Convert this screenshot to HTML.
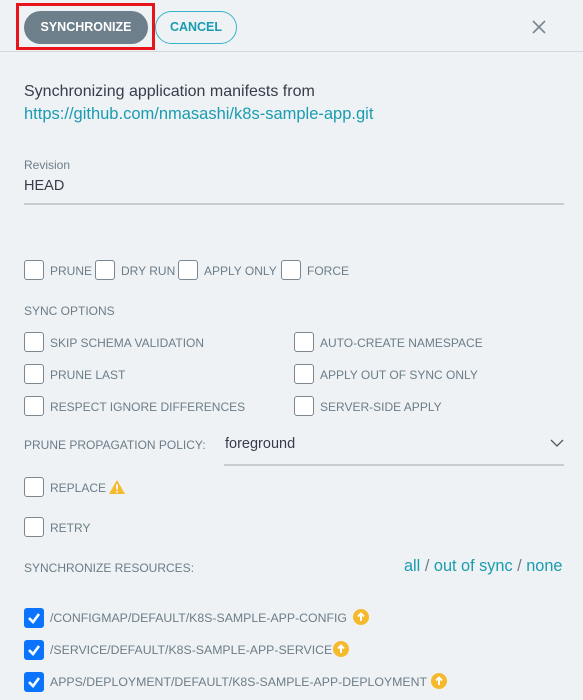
<!DOCTYPE html><html><head><style>
html,body{margin:0;width:583px;height:700px;overflow:hidden}
body{background:#eef2f5;font-family:"Liberation Sans",sans-serif;position:relative}
.a{position:absolute;white-space:nowrap}
.cb{position:absolute;width:18px;height:18px;border:1px solid #7a8690;border-radius:3px;background:#fff}
.cc{position:absolute;width:20px;height:20px;border-radius:3px;background:#0a74ff}
.l{position:absolute;font-size:12px;color:#6c7d88;white-space:nowrap}
.r{font-size:12.3px}
.up{position:absolute;width:16px;height:16px}
</style></head><body>
<div class="a" style="left:0;top:51px;width:583px;height:1px;background:#d3d8dc"></div>
<div class="a" style="left:16px;top:3px;width:133px;height:41px;border:3px solid #e8131b"></div>
<div class="a" style="left:24px;top:11px;width:124px;height:33px;border-radius:17px;background:#6d7f8b;color:#fff;font-weight:bold;font-size:12.5px;line-height:33px;text-align:center">SYNCHRONIZE</div>
<div class="a" style="left:155px;top:11px;width:80px;height:31px;border-radius:17px;border:1px solid #3ab5c8;color:#1a9cb0;font-weight:bold;font-size:12.5px;line-height:31px;text-align:center">CANCEL</div>
<svg class="a" style="left:531px;top:19px" width="16" height="16"><path d="M2 2L14 14M14 2L2 14" stroke="#7b8790" stroke-width="1.6"/></svg>
<div class="a" style="left:24px;top:83px;font-size:16px;color:#363c4a">Synchronizing application manifests from</div>
<div class="a" style="left:24px;top:105px;font-size:16.5px;color:#1a9cb0">https://github.com/nmasashi/k8s-sample-app.git</div>
<div class="a" style="left:24px;top:158px;font-size:12px;color:#6c7d88">Revision</div>
<div class="a" style="left:24px;top:178px;font-size:14.5px;color:#363c4a">HEAD</div>
<div class="a" style="left:24px;top:203px;width:540px;height:2px;background:#c8cccf"></div>
<div class="cb" style="left:24px;top:260px"></div><div class="l" style="left:50px;top:264px">PRUNE</div>
<div class="cb" style="left:95px;top:260px"></div><div class="l" style="left:121px;top:264px">DRY RUN</div>
<div class="cb" style="left:178px;top:260px"></div><div class="l" style="left:204px;top:264px">APPLY ONLY</div>
<div class="cb" style="left:281px;top:260px"></div><div class="l" style="left:307px;top:264px">FORCE</div>
<div class="l" style="left:24px;top:304px">SYNC OPTIONS</div>
<div class="cb" style="left:24px;top:332px"></div><div class="l" style="left:50px;top:336px">SKIP SCHEMA VALIDATION</div>
<div class="cb" style="left:294px;top:332px"></div><div class="l" style="left:320px;top:336px">AUTO-CREATE NAMESPACE</div>
<div class="cb" style="left:24px;top:364px"></div><div class="l" style="left:50px;top:368px">PRUNE LAST</div>
<div class="cb" style="left:294px;top:364px"></div><div class="l" style="left:320px;top:368px">APPLY OUT OF SYNC ONLY</div>
<div class="cb" style="left:24px;top:396px"></div><div class="l" style="left:50px;top:400px">RESPECT IGNORE DIFFERENCES</div>
<div class="cb" style="left:294px;top:396px"></div><div class="l" style="left:320px;top:400px">SERVER-SIDE APPLY</div>
<div class="l" style="left:24px;top:438px">PRUNE PROPAGATION POLICY:</div>
<div class="a" style="left:225px;top:436px;font-size:14.5px;color:#363c4a">foreground</div>
<svg class="a" style="left:550px;top:439px" width="14" height="9"><path d="M1 1L7 7L13 1" stroke="#555" stroke-width="1.3" fill="none"/></svg>
<div class="a" style="left:224px;top:464px;width:340px;height:2px;background:#c8cccf"></div>
<div class="cb" style="left:24px;top:477px"></div><div class="l" style="left:50px;top:481px">REPLACE</div>
<svg class="a" style="left:108px;top:479px" width="18" height="16"><path d="M9 1L17 15H1Z" fill="#f6b92b"/><path d="M9 5.5V10.5M9 12V13.5" stroke="#fff" stroke-width="1.8"/></svg>
<div class="cb" style="left:24px;top:517px"></div><div class="l" style="left:50px;top:521px">RETRY</div>
<div class="l" style="left:24px;top:561px">SYNCHRONIZE RESOURCES:</div>
<div class="a" style="left:404px;top:557px;font-size:16.3px;color:#1a9cb0">all <span style="color:#6c7d88">/</span> out of sync <span style="color:#6c7d88">/</span> none</div>
<svg width="0" height="0" style="position:absolute"><defs><g id="u"><circle cx="8" cy="8" r="8" fill="#f6b92b"/><path d="M8 12V4.5M5 7.5L8 4.5L11 7.5" stroke="#fff" stroke-width="2" fill="none"/></g><path id="k" d="M5 10L9 14L15 6" stroke="#fff" stroke-width="2.6" fill="none"/></defs></svg>
<svg class="cc" style="left:24px;top:608px" width="20" height="20"><use href="#k"/></svg><div class="l r" style="left:50px;top:611px">/CONFIGMAP/DEFAULT/K8S-SAMPLE-APP-CONFIG</div><svg class="up" style="left:353px;top:609px"><use href="#u"/></svg>
<svg class="cc" style="left:24px;top:640px" width="20" height="20"><use href="#k"/></svg><div class="l r" style="left:50px;top:643px">/SERVICE/DEFAULT/K8S-SAMPLE-APP-SERVICE</div><svg class="up" style="left:333px;top:641px"><use href="#u"/></svg>
<svg class="cc" style="left:24px;top:672px" width="20" height="20"><use href="#k"/></svg><div class="l r" style="left:50px;top:675px">APPS/DEPLOYMENT/DEFAULT/K8S-SAMPLE-APP-DEPLOYMENT</div><svg class="up" style="left:431px;top:673px"><use href="#u"/></svg>
</body></html>
